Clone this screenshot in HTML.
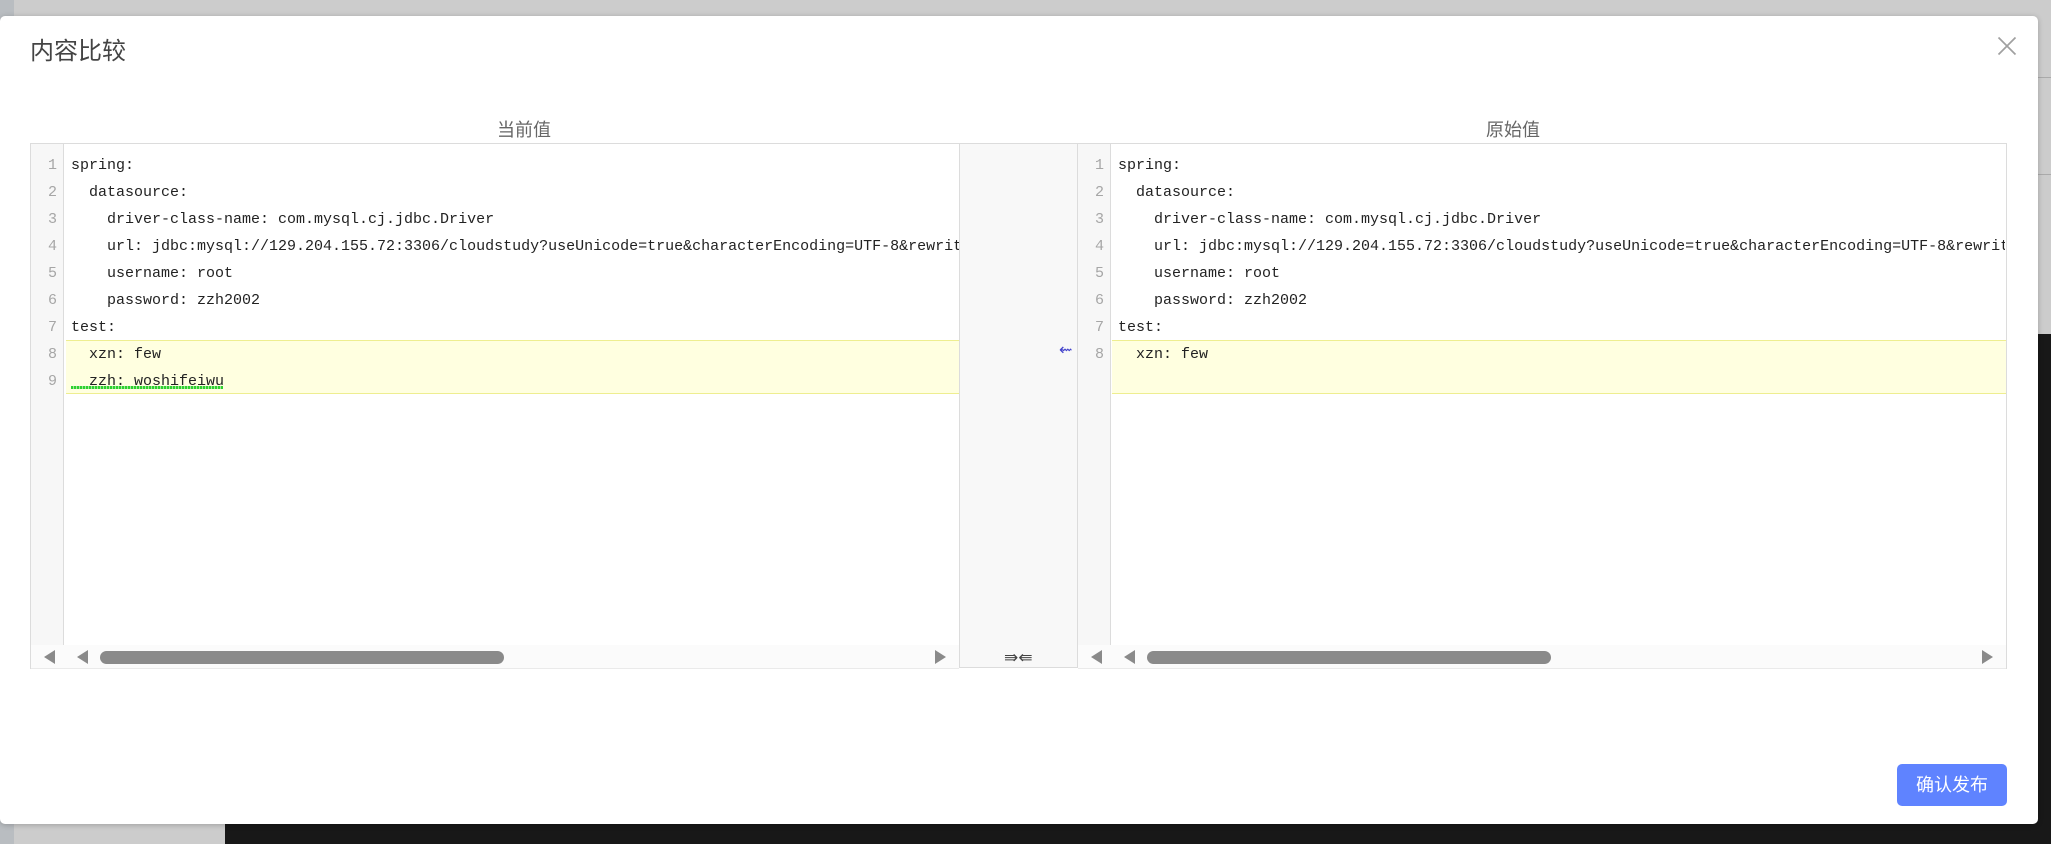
<!DOCTYPE html>
<html lang="zh">
<head>
<meta charset="utf-8">
<style>
html,body{margin:0;padding:0;width:2051px;height:844px;overflow:hidden;background:#ccc;}
*{box-sizing:border-box;}
.bg{position:absolute;}
#modal{position:absolute;left:0;top:16px;width:2038px;height:808px;background:#fff;border-radius:5px;box-shadow:0 1px 6px rgba(0,0,0,.22);}
.t{position:absolute;font-family:"Liberation Sans","Noto Sans CJK SC",sans-serif;white-space:nowrap;}
.pane{position:absolute;top:143px;height:526px;overflow:hidden;border-top:1px solid #dcdcdc;}
.gut{position:absolute;left:0;top:0;width:33px;height:501px;background:#f7f7f7;border-right:1px solid #dcdcdc;}
.hl{position:absolute;height:54px;top:196px;background:#ffffe0;border-top:1px solid #eeee90;border-bottom:1px solid #eeee90;}
.ln{position:absolute;left:0;width:26px;text-align:right;font:15px/27px "Liberation Mono",monospace;color:#a6a6a6;height:27px;}
.cd{position:absolute;font:15px/27px "Liberation Mono",monospace;color:#222;white-space:pre;height:27px;}
.sb{position:absolute;left:0;top:501px;height:24px;background:#fbfbfb;border-bottom:1px solid #eaeaea;}
.th{position:absolute;top:6px;height:13px;width:404px;border-radius:7px;background:#8a8a8a;}
.ar{position:absolute;top:5px;width:0;height:0;border-top:7px solid transparent;border-bottom:7px solid transparent;}
.l{border-right:11px solid #8a8a8a;}
.r{border-left:11px solid #8a8a8a;}
</style>
</head>
<body>
<div class="bg" style="left:0;top:0;width:14px;height:844px;background:#b9bdc1;"></div>
<div class="bg" style="left:225px;top:334px;width:1826px;height:510px;background:#181818;"></div>
<div class="bg" style="left:2038px;top:77px;width:13px;height:1px;background:#aaa;"></div>
<div class="bg" style="left:2038px;top:174px;width:13px;height:1px;background:#aaa;"></div>

<div id="modal"></div>

<div class="t" style="left:30px;top:34px;font-size:24px;line-height:36px;color:#444;">内容比较</div>
<svg style="position:absolute;left:1996px;top:35px;" width="22" height="22" viewBox="0 0 22 22"><path d="M2.500 2.500L19.500 19.500M19.500 2.500L2.500 19.500" stroke="#a0a0a0" stroke-width="1.700" fill="none"/></svg>

<div class="t" style="left:497px;top:117px;font-size:18px;line-height:26px;color:#666;">当前值</div>
<div class="t" style="left:1486px;top:117px;font-size:18px;line-height:26px;color:#666;">原始值</div>

<!-- left pane -->
<div class="pane" style="left:30px;width:929px;border-left:1px solid #dcdcdc;">
  <div class="gut"></div>
  <div class="hl" style="left:35px;width:893px;"></div>
  <div class="ln" style="top:8px;">1</div><div class="ln" style="top:35px;">2</div><div class="ln" style="top:62px;">3</div><div class="ln" style="top:89px;">4</div><div class="ln" style="top:116px;">5</div><div class="ln" style="top:143px;">6</div><div class="ln" style="top:170px;">7</div><div class="ln" style="top:197px;">8</div><div class="ln" style="top:224px;">9</div>
  <div class="cd" style="left:40px;top:8px;">spring:</div>
  <div class="cd" style="left:40px;top:35px;">  datasource:</div>
  <div class="cd" style="left:40px;top:62px;">    driver-class-name: com.mysql.cj.jdbc.Driver</div>
  <div class="cd" style="left:40px;top:89px;">    url: jdbc:mysql://129.204.155.72:3306/cloudstudy?useUnicode=true&amp;characterEncoding=UTF-8&amp;rewriteBatchedStatements=true</div>
  <div class="cd" style="left:40px;top:116px;">    username: root</div>
  <div class="cd" style="left:40px;top:143px;">    password: zzh2002</div>
  <div class="cd" style="left:40px;top:170px;">test:</div>
  <div class="cd" style="left:40px;top:197px;">  xzn: few</div>
  <div class="cd" style="left:40px;top:224px;">  zzh: woshifeiwu</div>
  <div style="position:absolute;left:40px;top:242px;width:152px;height:3px;background:repeating-linear-gradient(90deg,#2fd12f 0 2px,#9fe89a 2px 3px);"></div>
  <div class="sb" style="width:929px;">
    <div class="ar l" style="left:13px;"></div>
    <div class="ar l" style="left:46px;"></div>
    <div class="th" style="left:69px;"></div>
    <div class="ar r" style="left:904px;"></div>
  </div>
</div>

<!-- middle gap -->
<div style="position:absolute;left:959px;top:143px;width:119px;height:525px;background:#f8f8f8;border:1px solid #dcdcdc;"></div>
<div class="t" style="left:1059px;top:338px;font-family:'DejaVu Sans',sans-serif;font-size:16px;line-height:24px;color:#44c;">⇜</div>
<div class="t" style="left:1004px;top:646px;font-family:'DejaVu Sans',sans-serif;font-size:17px;line-height:24px;color:#444;">⇛⇚</div>

<!-- right pane -->
<div class="pane" style="left:1078px;width:929px;border-right:1px solid #dcdcdc;">
  <div class="gut" style="width:33px;"></div>
  <div class="hl" style="left:34px;width:894px;"></div>
  <div class="ln" style="top:8px;">1</div><div class="ln" style="top:35px;">2</div><div class="ln" style="top:62px;">3</div><div class="ln" style="top:89px;">4</div><div class="ln" style="top:116px;">5</div><div class="ln" style="top:143px;">6</div><div class="ln" style="top:170px;">7</div><div class="ln" style="top:197px;">8</div>
  <div class="cd" style="left:40px;top:8px;">spring:</div>
  <div class="cd" style="left:40px;top:35px;">  datasource:</div>
  <div class="cd" style="left:40px;top:62px;">    driver-class-name: com.mysql.cj.jdbc.Driver</div>
  <div class="cd" style="left:40px;top:89px;width:887px;overflow:hidden;">    url: jdbc:mysql://129.204.155.72:3306/cloudstudy?useUnicode=true&amp;characterEncoding=UTF-8&amp;rewriteBatchedStatements=true</div>
  <div class="cd" style="left:40px;top:116px;">    username: root</div>
  <div class="cd" style="left:40px;top:143px;">    password: zzh2002</div>
  <div class="cd" style="left:40px;top:170px;">test:</div>
  <div class="cd" style="left:40px;top:197px;">  xzn: few</div>
  <div class="sb" style="width:928px;">
    <div class="ar l" style="left:13px;"></div>
    <div class="ar l" style="left:46px;"></div>
    <div class="th" style="left:69px;"></div>
    <div class="ar r" style="left:904px;"></div>
  </div>
</div>

<div class="t" style="left:1897px;top:764px;width:110px;height:42px;background:#5f83ff;border-radius:5px;color:#fff;font-size:18px;line-height:42px;text-align:center;">确认发布</div>
</body>
</html>
